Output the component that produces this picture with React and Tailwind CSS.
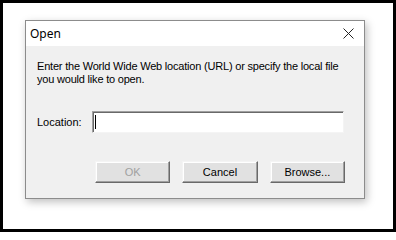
import React from 'react';

const btn =
  'w-[76px] h-[22px] bg-[#e1e1e1] border border-t-[#f4f4f4] border-l-[#f4f4f4] border-r-[#696969] border-b-[#696969] shadow-[inset_-1px_-1px_0_#a0a0a0,inset_1px_1px_0_#ffffff] text-[11px] flex items-center justify-center';

function App() {
  return (
    <div className="w-[396px] h-[232px] border-[3px] border-black bg-white pl-[22px] pt-[17px] font-['Liberation_Sans',Arial,sans-serif]">
      <div className="w-[340px] h-[179px] border border-[#8c8c8c] shadow-[2px_3px_8px_rgba(0,0,0,0.25)] flex flex-col bg-[#f0f0f0]">
        <div className="h-[25px] bg-white flex items-center justify-between pl-[4px] pr-[10px]">
          <span className="text-[12px] text-black font-['Noto_Sans',sans-serif]">Open</span>
          <svg width="11" height="11" viewBox="0 0 11 11" className="text-[#222]">
            <path d="M0.5 0.5 L10.5 10.5 M10.5 0.5 L0.5 10.5" stroke="currentColor" strokeWidth="1" />
          </svg>
        </div>
        <div className="flex-1 flex flex-col pl-[11px] pr-[19px] pt-[14px]">
          <p className="text-[11px] leading-[13px] text-black whitespace-nowrap tracking-[-0.2px]">
            Enter the World Wide Web location (URL) or specify the local file
            <br />
            you would like to open.
          </p>
          <div className="flex items-center mt-[25px]">
            <span className="w-[55px] text-[11px] text-black">Location:</span>
            <div className="w-[252px] h-[22px] bg-white border border-t-[#a0a0a0] border-l-[#a0a0a0] border-r-[#f4f4f4] border-b-[#f4f4f4] shadow-[inset_1px_1px_0_#696969] flex items-center pl-[2px]">
              <div className="w-px h-[14px] bg-black" />
            </div>
          </div>
          <div className="flex gap-[12px] mt-[28px] pl-[58px]">
            <button className={btn + ' text-[#a0a0a0]'}>OK</button>
            <button className={btn + ' text-black'}>Cancel</button>
            <button className={btn + ' text-black'}>Browse...</button>
          </div>
        </div>
      </div>
    </div>
  );
}

export default App;
